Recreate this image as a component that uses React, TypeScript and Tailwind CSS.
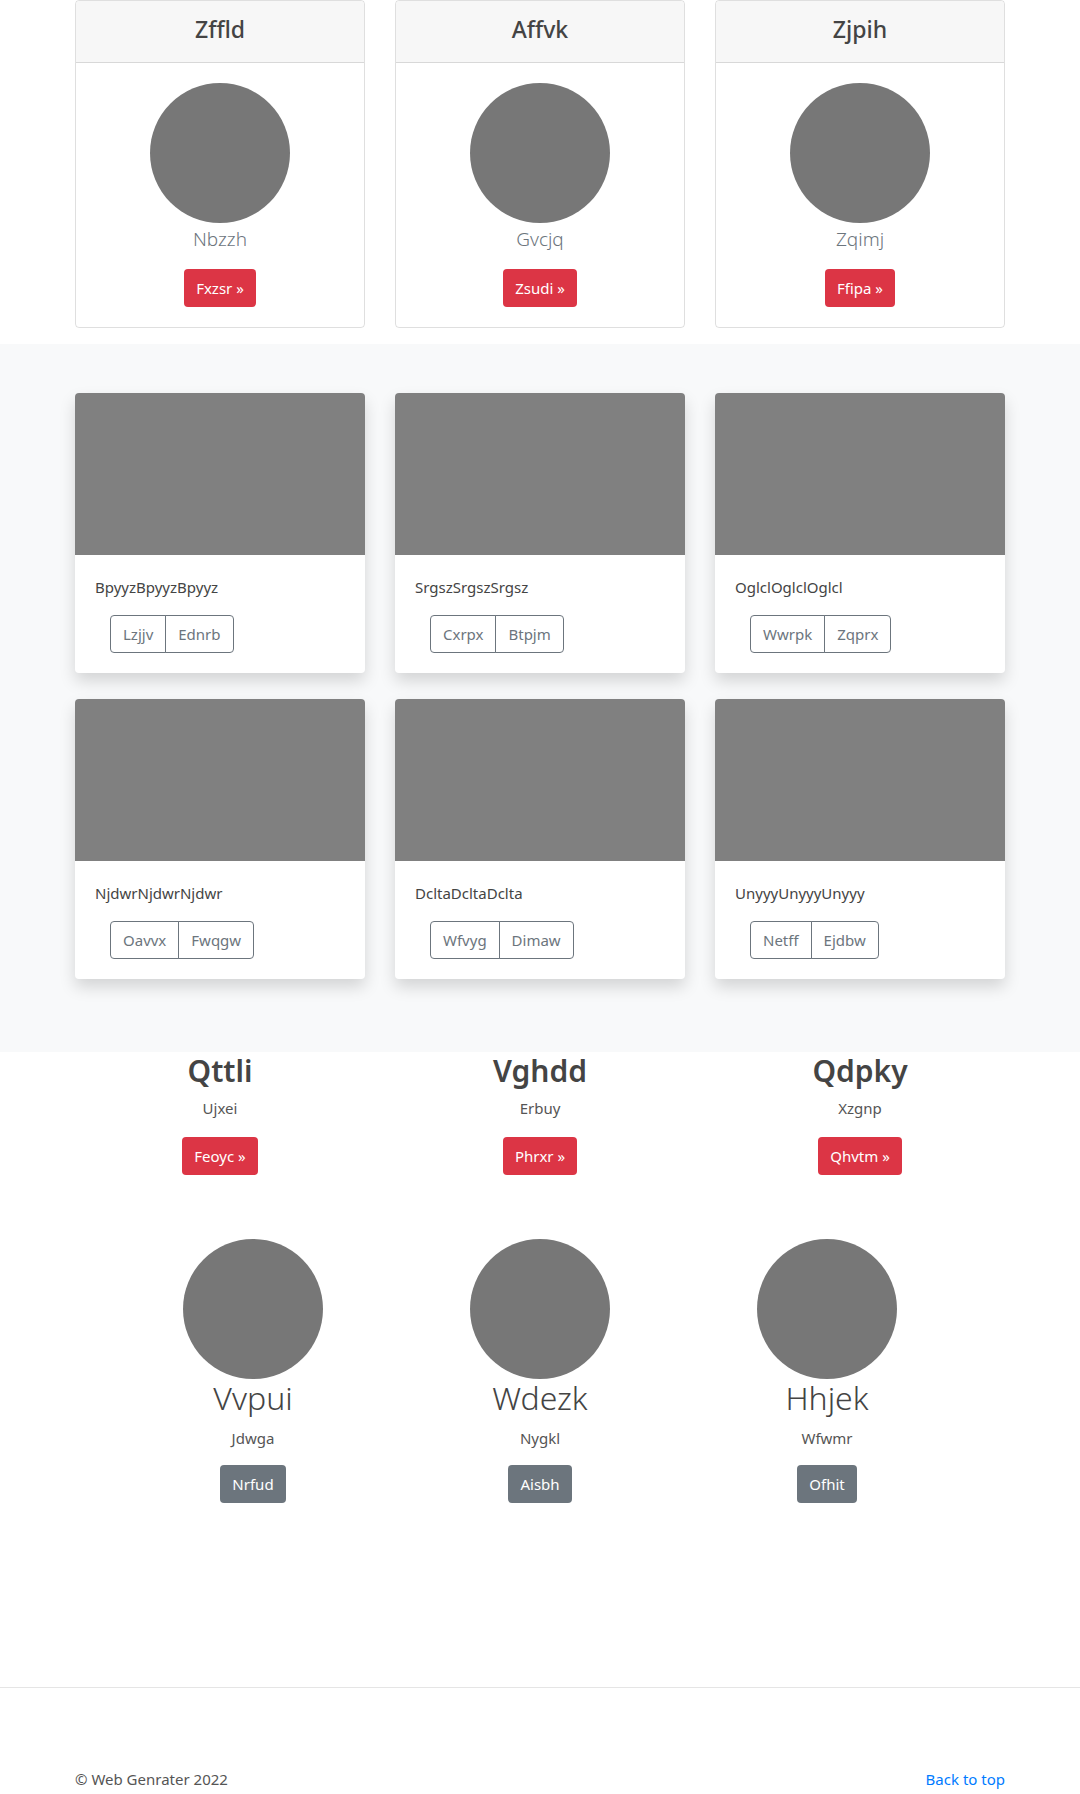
// Bootstrap-like landing page: pricing cards, album grid, feature columns, team row, footer.
const pricing = [
  { title: "Zffld", name: "Nbzzh", cta: "Fxzsr" },
  { title: "Affvk", name: "Gvcjq", cta: "Zsudi" },
  { title: "Zjpih", name: "Zqimj", cta: "Ffipa" },
]

const album = [
  { text: "BpyyzBpyyzBpyyz", a: "Lzjjv", b: "Ednrb" },
  { text: "SrgszSrgszSrgsz", a: "Cxrpx", b: "Btpjm" },
  { text: "OglclOglclOglcl", a: "Wwrpk", b: "Zqprx" },
  { text: "NjdwrNjdwrNjdwr", a: "Oavvx", b: "Fwqgw" },
  { text: "DcltaDcltaDclta", a: "Wfvyg", b: "Dimaw" },
  { text: "UnyyyUnyyyUnyyy", a: "Netff", b: "Ejdbw" },
]

const features = [
  { title: "Qttli", sub: "Ujxei", cta: "Feoyc" },
  { title: "Vghdd", sub: "Erbuy", cta: "Phrxr" },
  { title: "Qdpky", sub: "Xzgnp", cta: "Qhvtm" },
]

const team = [
  { name: "Vvpui", sub: "Jdwga", cta: "Nrfud" },
  { name: "Wdezk", sub: "Nygkl", cta: "Aisbh" },
  { name: "Hhjek", sub: "Wfwmr", cta: "Ofhit" },
]

export default function App() {
  return (
    <div className="min-h-[1794px] bg-white font-['Noto_Sans','Open_Sans',sans-serif] text-[#212529]">
      {/* pricing */}
      <div className="mx-auto w-[960px] px-[15px] pb-4">
        <div className="grid grid-cols-3 gap-x-[30px]">
          {pricing.map((p) => (
            <div key={p.title} className="rounded-[4px] border border-[rgba(0,0,0,0.125)]">
              <div className="flex h-[62px] items-center justify-center rounded-t-[4px] border-b border-[rgba(0,0,0,0.125)] bg-[#f7f7f7] pb-1">
                <h4 className="text-[23px] font-medium text-[#444]">{p.title}</h4>
              </div>
              <div className="flex flex-col items-center py-5">
                <div className="h-[140px] w-[140px] rounded-full bg-[#777]" />
                <div className="mt-[4px] text-[19px] font-light leading-[24px] text-[#6c757d]">{p.name}</div>
                <button className="mt-[18px] h-[38px] rounded-[4px] bg-[#dc3545] px-3 text-[15px] text-white">
                  {p.cta} »
                </button>
              </div>
            </div>
          ))}
        </div>
      </div>

      {/* album */}
      <div className="bg-[#f8f9fa] pb-[49px] pt-[49px]">
        <div className="mx-auto mb-6 grid w-[960px] grid-cols-3 gap-x-[30px] gap-y-[26px] px-[15px]">
          {album.map((c) => (
            <div key={c.text} className="rounded-[4px] bg-white shadow-[0_8px_16px_rgba(0,0,0,0.15)]">
              <div className="h-[162px] rounded-t-[4px] bg-[#808080]" />
              <div className="p-5">
                <p className="text-[15px] leading-[24px] text-[#444]">{c.text}</p>
                <div className="ml-[15px] mt-4 flex">
                  <button className="h-[38px] rounded-l-[4px] border border-[#6c757d] px-3 text-[15px] text-[#6c757d]">
                    {c.a}
                  </button>
                  <button className="-ml-px h-[38px] rounded-r-[4px] border border-[#6c757d] px-3 text-[15px] text-[#6c757d]">
                    {c.b}
                  </button>
                </div>
              </div>
            </div>
          ))}
        </div>
      </div>

      {/* features */}
      <div className="mx-auto grid w-[960px] grid-cols-3 gap-x-[30px] px-[15px]">
        {features.map((f) => (
          <div key={f.title} className="flex flex-col items-center">
            <h2 className="text-[30px] font-semibold leading-[38px] text-[#444]">{f.title}</h2>
            <p className="mt-[6px] text-[15px] leading-[24px] text-[#555]">{f.sub}</p>
            <button className="mt-[17px] h-[38px] rounded-[4px] bg-[#dc3545] px-3 text-[15px] text-white">
              {f.cta} »
            </button>
          </div>
        ))}
      </div>

      {/* team */}
      <div className="mx-auto mt-16 grid w-[861px] grid-cols-3">
        {team.map((t) => (
          <div key={t.name} className="flex flex-col items-center">
            <div className="h-[140px] w-[140px] rounded-full bg-[#777]" />
            <h2 className="-mt-px text-[32px] font-light leading-[40px] text-[#444]">{t.name}</h2>
            <p className="mt-2 text-[15px] leading-[24px] text-[#555]">{t.sub}</p>
            <button className="mt-[15px] h-[38px] rounded-[4px] bg-[#6c757d] px-3 text-[15px] text-white">
              {t.cta}
            </button>
          </div>
        ))}
      </div>

      {/* footer */}
      <footer className="mt-[184px] border-t border-[#e5e5e5] pt-[79px]">
        <div className="mx-auto flex w-[960px] justify-between px-[15px] text-[15px] leading-[24px]">
          <p className="text-[#555]">© Web Genrater 2022</p>
          <a href="#" className="text-[#007bff]">
            Back to top
          </a>
        </div>
      </footer>
    </div>
  )
}
